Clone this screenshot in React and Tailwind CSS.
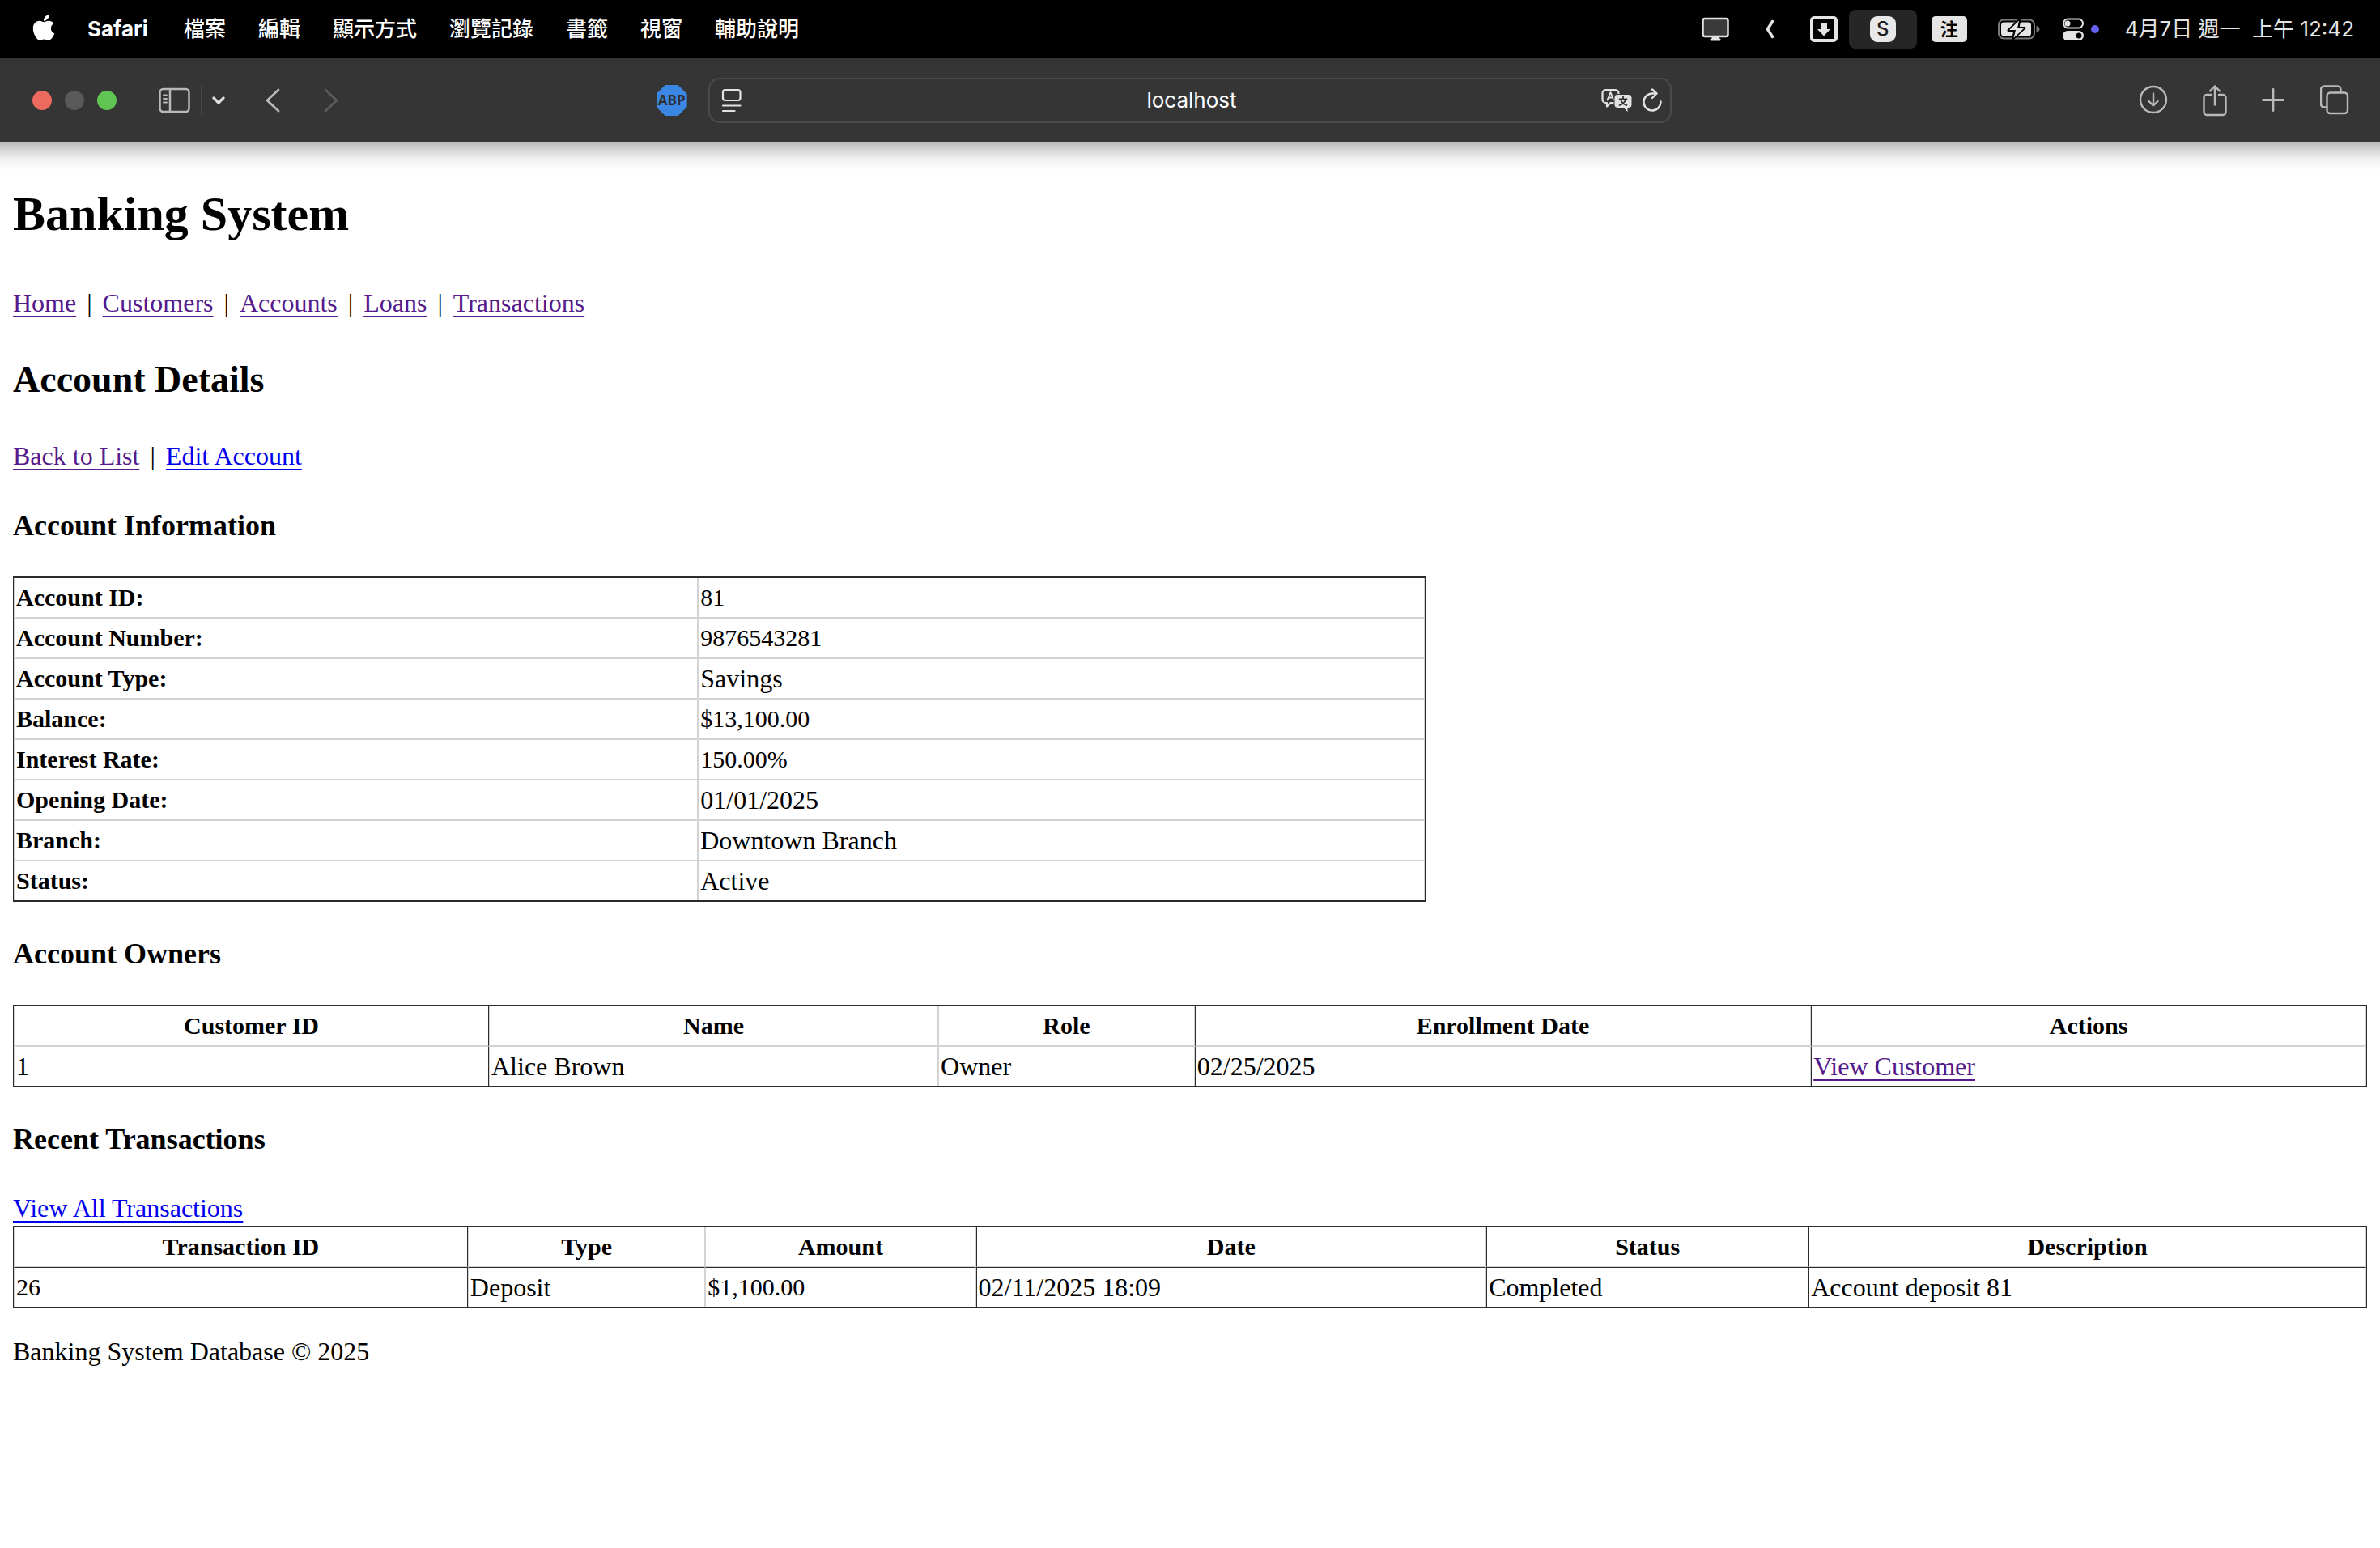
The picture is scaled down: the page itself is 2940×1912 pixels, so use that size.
import React from "react";
import { FaApple } from "react-icons/fa";

const menus = ["檔案", "編輯", "顯示方式", "瀏覽記錄", "書籤", "視窗", "輔助說明"];

function Svg({ w, h, className, children, ...rest }) {
  return (
    <svg
      width={w}
      height={h}
      viewBox={`0 0 ${w} ${h}`}
      fill="none"
      strokeLinecap="round"
      strokeLinejoin="round"
      className={className}
      aria-hidden="true"
      {...rest}
    >
      {children}
    </svg>
  );
}

function MenuBar() {
  return (
    <div className="flex h-[72px] items-center justify-between bg-black pl-10 pr-8 text-[26px] leading-9 text-white">
      <div className="flex items-center">
        <button aria-label="Apple" className="pb-1">
          <FaApple className="h-9 w-7" />
        </button>
        <button className="ml-10 font-bold">Safari</button>
        <div className="ml-11 flex gap-10">
          {menus.map((m) => (
            <button key={m} className="font-medium">
              {m}
            </button>
          ))}
        </div>
      </div>
      <div className="flex items-center text-[#e4e4e4]">
        <Svg w={34} h={30}>
          <rect x="1.500" y="2" width="31" height="22" rx="2.500" fill="#3a3a3a" stroke="#e4e4e4" strokeWidth="2.500" />
          <path d="M13 24h8v3h2v2H11v-2h2z" fill="#e4e4e4" stroke="#e4e4e4" strokeWidth="1" />
        </Svg>
        <Svg w={12} h={24} className="ml-11">
          <path d="M9.500 2.500 3.500 12l6 9.500" stroke="#e4e4e4" strokeWidth="3.500" />
        </Svg>
        <Svg w={34} h={32} className="ml-11">
          <rect x="2" y="2" width="30" height="28" rx="3" stroke="#e4e4e4" strokeWidth="4" />
          <path d="M13 8h8v8h4l-8 8.500L9 16h4z" fill="#e4e4e4" />
        </Svg>
        <div className="ml-[14px] flex h-12 w-[84px] items-center justify-center rounded-lg bg-[#262626]">
          <span className="flex h-8 w-8 items-center justify-center rounded-[9px] bg-[#e8e8e8] text-2xl font-medium text-[#1c1c1c]">
            S
          </span>
        </div>
        <span className="ml-[18px] flex h-8 w-11 items-center justify-center rounded-[5px] bg-[#e4e4e4] text-[22px] font-bold leading-8 text-black">
          注
        </span>
        <Svg w={52} h={26} className="ml-[38px]">
          <rect x="1" y="1.500" width="44" height="23" rx="6" stroke="#7a7a7a" strokeWidth="2" />
          <rect x="4" y="4.500" width="37" height="17" rx="3.500" fill="#e4e4e4" />
          <path d="M47.500 8.500c3 1.500 4 3 4 4.500s-1 3-4 4.500z" fill="#7a7a7a" />
          <path d="M27 1 13 14.500h8L18.500 25 33 11.500h-8z" fill="#e4e4e4" stroke="#000" strokeWidth="3" />
          <path d="M26 2.500 14 14h8l-2.500 10L32 12h-8z" fill="#e4e4e4" />
        </Svg>
        <Svg w={28} h={28} className="ml-[27px]">
          <rect x="2" y="1.500" width="24" height="11" rx="5.500" stroke="#e4e4e4" strokeWidth="2" />
          <circle cx="7" cy="7" r="3.500" fill="#e4e4e4" />
          <rect x="1" y="16" width="26" height="12" rx="6" fill="#e4e4e4" />
          <circle cx="21" cy="22" r="3.500" fill="#000" />
        </Svg>
        <span className="ml-2 h-[10px] w-[10px] rounded-full bg-[#6361ee]" />
        <time className="ml-8 whitespace-pre">4月7日 週一  上午 12:42</time>
      </div>
    </div>
  );
}

function Toolbar() {
  return (
    <div className="relative grid h-[104px] grid-cols-[1fr_40.5%_1fr] items-center bg-[#353535]">
      <div className="flex items-center pl-10 pr-[26px]">
        <div className="flex gap-4">
          <button aria-label="Close" className="h-6 w-6 rounded-full bg-[#ed6a5e]" />
          <button aria-label="Minimize" className="h-6 w-6 rounded-full bg-[#595959]" />
          <button aria-label="Zoom" className="h-6 w-6 rounded-full bg-[#61c554]" />
        </div>
        <button aria-label="Sidebar" className="ml-[52px]">
          <Svg w={40} h={32} stroke="#b9b9b9">
            <rect x="1.500" y="2" width="36" height="28" rx="4" strokeWidth="2.500" />
            <path d="M14 2v28" strokeWidth="2.500" />
            <path d="M6 9.500h4M6 14h4M6 18.500h4" strokeWidth="1.800" />
          </Svg>
        </button>
        <span className="ml-3 h-9 w-0.5 bg-[#484848]" />
        <button aria-label="Tab groups" className="ml-3">
          <Svg w={16} h={12}>
            <path d="m2 3 6 6 6-6" stroke="#dedede" strokeWidth="3.200" />
          </Svg>
        </button>
        <button aria-label="Back" className="ml-[49px]">
          <Svg w={20} h={32}>
            <path d="M17 3 3 16l14 13" stroke="#b9b9b9" strokeWidth="2.800" />
          </Svg>
        </button>
        <button aria-label="Forward" className="ml-[52px]">
          <Svg w={20} h={32}>
            <path d="m3 3 14 13L3 29" stroke="#5c5c5c" strokeWidth="2.800" />
          </Svg>
        </button>
        <button
          aria-label="Adblock Plus"
          className="ml-auto flex h-[38px] w-[38px] items-center justify-center bg-[#3b88e4] text-[17px] font-bold leading-5 text-[#303030] [clip-path:polygon(29%_0,71%_0,100%_29%,100%_71%,71%_100%,29%_100%,0_71%,0_29%)] font-['Open_Sans',sans-serif]"
        >
          ABP
        </button>
      </div>

      <div className="grid h-14 grid-cols-[98px_1fr_94px] items-center rounded-[14px] border-2 border-[#4b4b4b] text-white">
        <button aria-label="Reader" className="justify-self-start pl-[14px]">
          <Svg w={26} h={32} stroke="#e2e2e2">
            <rect x="2" y="3" width="21.500" height="13" rx="3" strokeWidth="2.200" />
            <path d="M2 22.500h21.500M2 29h14.500" strokeWidth="2.200" />
          </Svg>
        </button>
        <input
          aria-label="Address"
          defaultValue="localhost"
          className="w-full bg-transparent text-center text-[26px] leading-9 outline-none"
        />
        <div className="flex items-center justify-end gap-3 pr-[10px]">
          <button aria-label="Translate">
            <Svg w={40} h={30}>
              <path
                d="M6.500 2h12a4 4 0 0 1 4 4v8a4 4 0 0 1-4 4h-6L8 22.500V18H6.500a4 4 0 0 1-4-4V6a4 4 0 0 1 4-4z"
                stroke="#e2e2e2"
                strokeWidth="2.200"
              />
              <path d="m8.500 14.500 4-9.500 4 9.500M10 11.500h5" stroke="#e2e2e2" strokeWidth="1.800" />
              <path
                d="M21 7.500h14a4 4 0 0 1 4 4v9a4 4 0 0 1-4 4h-1V30l-5.500-5.500H21a4 4 0 0 1-4-4v-9a4 4 0 0 1 4-4z"
                fill="#e2e2e2"
                stroke="#353535"
                strokeWidth="1"
              />
              <path d="M28 10.500v2.500M23.500 13.500h9M31 14c-1 3.500-4 6-7.500 7M25 14c1 3.500 4 6 7.500 7" stroke="#303030" strokeWidth="1.800" />
            </Svg>
          </button>
          <button aria-label="Reload">
            <Svg w={24} h={30} stroke="#e2e2e2" strokeWidth="2.400">
              <path d="M22.500 16.500A10.500 10.500 0 1 1 12 6.500h5" />
              <path d="m12 1.500 5.500 5-5.500 5.500" />
            </Svg>
          </button>
        </div>
      </div>

      <div className="flex items-center justify-end pr-[38px]">
        <button aria-label="Downloads">
          <Svg w={36} h={40} stroke="#b9b9b9" strokeWidth="2.400">
            <circle cx="18" cy="19" r="16" />
            <path d="M18 11.500V26M12.500 21l5.500 5.500 5.500-5.500" />
          </Svg>
        </button>
        <button aria-label="Share" className="ml-[42px]">
          <Svg w={32} h={40} stroke="#b9b9b9" strokeWidth="2.400">
            <path d="M11 13H6a3.500 3.500 0 0 0-3.500 3.500v18A3.500 3.500 0 0 0 6 38h20a3.500 3.500 0 0 0 3.500-3.500v-18A3.500 3.500 0 0 0 26 13h-5" />
            <path d="M16 25.500V2.500M10 8.500l6-6 6 6" />
          </Svg>
        </button>
        <button aria-label="New tab" className="ml-[42px]">
          <Svg w={28} h={40} stroke="#b9b9b9" strokeWidth="2.800">
            <path d="M14 6.500v26M1.500 19.500h25" />
          </Svg>
        </button>
        <button aria-label="Tab overview" className="ml-[44px]">
          <Svg w={36} h={40} stroke="#b9b9b9" strokeWidth="2.400">
            <rect x="8.500" y="10.500" width="25.500" height="25.500" rx="4" />
            <path d="M8 28.500H5A4 4 0 0 1 1 24.500V6.500a4 4 0 0 1 4-4h16.500a4 4 0 0 1 4 4v3.500" />
          </Svg>
        </button>
      </div>

      <div className="pointer-events-none absolute inset-x-0 top-full h-9 bg-[linear-gradient(to_bottom,#bcbcbc,#d8d8d8_28%,#f0f0f0_58%,#fbfbfb_80%,#ffffff)]" />
    </div>
  );
}

function Link({ visited, children }) {
  return (
    <a
      href="#"
      className={
        (visited ? "text-[#551a8b]" : "text-[#0000ee]") +
        " underline decoration-2 underline-offset-[5px]"
      }
    >
      {children}
    </a>
  );
}

function Heading3({ children }) {
  return <h3 className="mt-[42px] text-4xl font-bold leading-[44px]">{children}</h3>;
}

const DARK = "border-[#2b2b2b]";

const info = [
  ["Account ID:", "81", true],
  ["Account Number:", "9876543281", true],
  ["Account Type:", "Savings"],
  ["Balance:", "$13,100.00", true],
  ["Interest Rate:", "150.00%", true],
  ["Opening Date:", "01/01/2025"],
  ["Branch:", "Downtown Branch"],
  ["Status:", "Active"],
];

function InfoTable() {
  return (
    <table className={`mt-[41px] w-3/5 table-fixed border-separate border-spacing-0 border-x border-y-2 ${DARK}`}>
      <colgroup>
        <col className="w-[48.5%]" />
        <col />
      </colgroup>
      <tbody>
        {info.map(([label, value, numeric], i) => {
          const line = i < info.length - 1 ? "border-b-2 border-b-[#d3d3d3]" : "";
          return (
            <tr key={label}>
              <th
                scope="row"
                className={`border-l border-r border-x-[#d3d3d3] p-0.5 text-left text-3xl font-bold leading-[44px] ${line}`}
              >
                {label}
              </th>
              <td
                className={`border-l border-r border-x-[#d3d3d3] p-0.5 leading-[44px] ${numeric ? "text-3xl leading-[44px]" : ""} ${line}`}
              >
                {value}
              </td>
            </tr>
          );
        })}
      </tbody>
    </table>
  );
}

/* Each column names the tone of its left and right hairlines. */
const edge = {
  ll: "border-l-[#d3d3d3] border-r-[#d3d3d3]",
  ld: "border-l-[#d3d3d3] border-r-[#2b2b2b]",
  dl: "border-l-[#2b2b2b] border-r-[#d3d3d3]",
};

function DataTable({ columns, split, className }) {
  const outer = split ? "border" : "border-x border-y-2";
  return (
    <table className={`w-full table-fixed border-separate border-spacing-0 ${outer} ${DARK} ${className}`}>
      <colgroup>
        {columns.map((c) => (
          <col key={c.title} className={c.width} />
        ))}
      </colgroup>
      <thead>
        <tr>
          {columns.map((c) => (
            <th
              key={c.title}
              scope="col"
              className={`border-x p-0.5 text-center text-3xl font-bold leading-[44px] ${edge[c.edge]} ${
                split
                  ? "border-y border-y-[#d3d3d3]"
                  : "border-b-2 border-b-[#d3d3d3]"
              }`}
            >
              {c.title}
            </th>
          ))}
        </tr>
      </thead>
      <tbody>
        <tr>
          {columns.map((c) => (
            <td
              key={c.title}
              className={`border-x p-0.5 leading-[44px] ${edge[c.edge]} ${c.numeric ? "text-3xl leading-[44px]" : ""} ${
                split ? "border-t border-t-[#2b2b2b]" : ""
              }`}
            >
              {c.value}
            </td>
          ))}
        </tr>
      </tbody>
    </table>
  );
}

const owners = [
  { title: "Customer ID", value: "1", width: "w-[20.2%]", edge: "ld" },
  { title: "Name", value: "Alice Brown", width: "w-[19.1%]", edge: "ll" },
  { title: "Role", value: "Owner", width: "w-[10.9%]", edge: "ll" },
  { title: "Enrollment Date", value: "02/25/2025", width: "w-[26.2%]", edge: "dl" },
  { title: "Actions", value: <Link visited>View Customer</Link>, edge: "dl" },
];

const transactions = [
  { title: "Transaction ID", value: "26", width: "w-[19.3%]", edge: "ld", numeric: true },
  { title: "Type", value: "Deposit", width: "w-[10.1%]", edge: "ll" },
  { title: "Amount", value: "$1,100.00", width: "w-[11.5%]", edge: "ll", numeric: true },
  { title: "Date", value: "02/11/2025 18:09", width: "w-[21.7%]", edge: "dl" },
  { title: "Status", value: "Completed", width: "w-[13.7%]", edge: "dl" },
  { title: "Description", value: "Account deposit 81", edge: "dl" },
];

export default function App() {
  const nav = ["Home", "Customers", "Accounts", "Loans", "Transactions"];
  return (
    <div className="min-h-screen bg-white">
      <header className="font-['Inter','Noto_Sans_CJK_TC',sans-serif]">
        <MenuBar />
        <Toolbar />
      </header>
      <main className="px-4 pt-[52px] text-[32px] leading-[44px] text-black font-['Liberation_Serif',serif]">
        <h1 className="text-6xl font-bold leading-[72px]">Banking System</h1>
        <nav className="mt-[52px] flex gap-[13px]">
          {nav.map((n, i) => (
            <React.Fragment key={n}>
              {i > 0 && <span>|</span>}
              <Link visited>{n}</Link>
            </React.Fragment>
          ))}
        </nav>
        <h2 className="mt-[45px] text-[46px] font-bold leading-[56px]">Account Details</h2>
        <div className="mt-11 flex gap-[13px]">
          <Link visited>Back to List</Link>
          <span>|</span>
          <Link>Edit Account</Link>
        </div>
        <Heading3>Account Information</Heading3>
        <InfoTable />
        <Heading3>Account Owners</Heading3>
        <DataTable columns={owners} className="mt-[41px]" />
        <Heading3>Recent Transactions</Heading3>
        <div className="mt-[41px]">
          <Link>View All Transactions</Link>
        </div>
        <DataTable columns={transactions} split className="" />
        <footer className="mt-8">Banking System Database © 2025</footer>
      </main>
    </div>
  );
}
